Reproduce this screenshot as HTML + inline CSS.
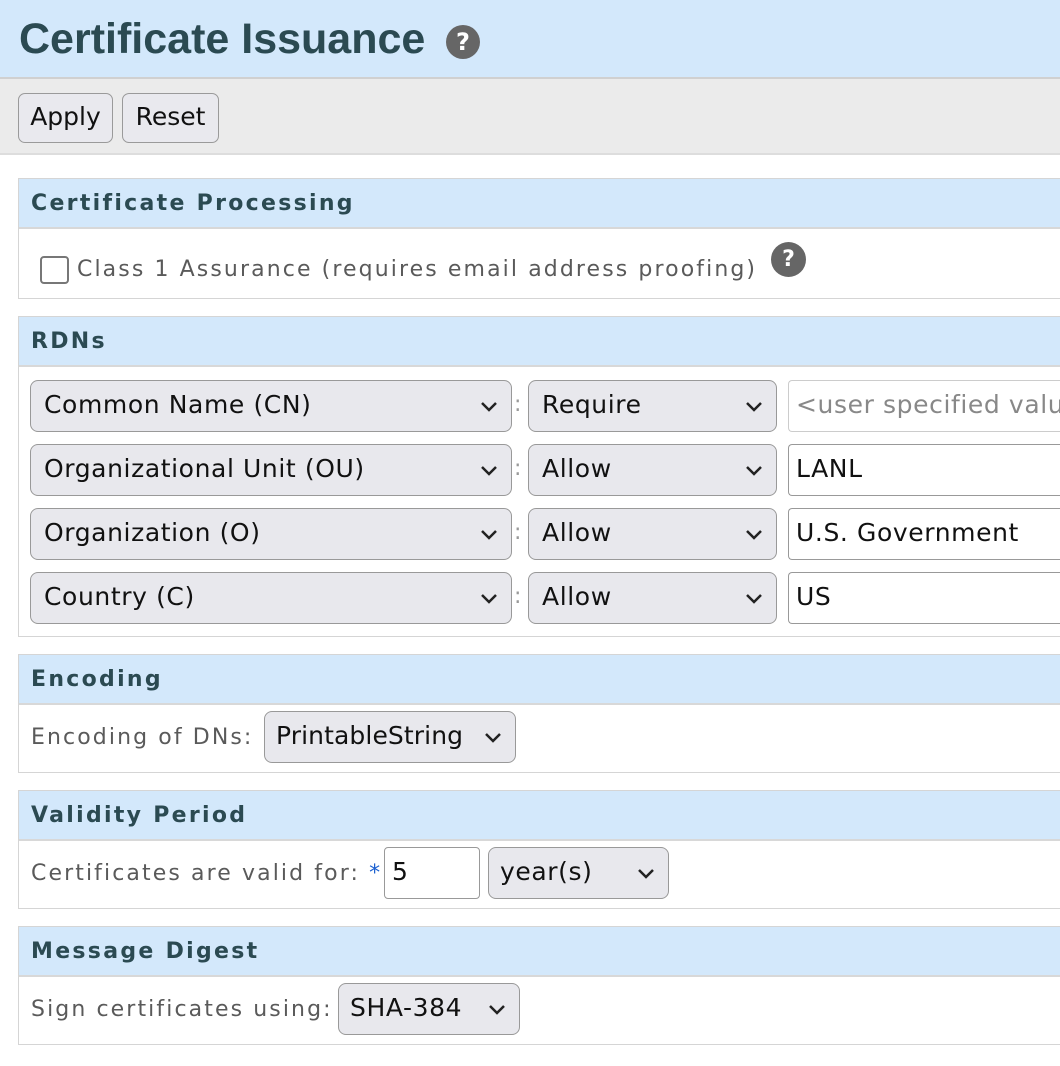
<!DOCTYPE html>
<html><head><style>
*{box-sizing:border-box;margin:0;padding:0}
body{width:1060px;height:1066px;background:#fff;position:relative;overflow:hidden;font-family:"DejaVu Sans","Liberation Sans",sans-serif}
.a{position:absolute}
.hdr{left:0;top:0;width:1060px;height:79px;background:#d3e8fb;border-bottom:2px solid #d0d0d0}
.title{left:19px;top:15px;font-size:43px;font-weight:bold;color:#2b4a52;font-family:"Liberation Sans",sans-serif;white-space:nowrap}
.q{width:34px;height:34px;border-radius:50%;background:#666;color:#fff;font-weight:bold;text-align:center;font-size:24px;line-height:34px}
.tb{left:0;top:79px;width:1060px;height:76px;background:#ebebeb;border-bottom:2px solid #ddd}
.btn{top:93px;height:50px;border:1.5px solid #9a9a9a;border-radius:7px;background:#e9e9ee;font-size:25px;line-height:46px;text-align:center;color:#111}
.box{left:18px;width:1060px;border:1.5px solid #d5d5d5;border-right:none}
.sh{height:50px;background:#d3e8fb;border-bottom:2px solid #d8d8d8;font-weight:bold;font-size:22px;color:#2b4a52;padding:12px 0 0 12px;letter-spacing:2.3px}
.lbl{font-size:22px;color:#5a5a5a;letter-spacing:2.1px;white-space:nowrap}
.sel{height:52px;border:1.5px solid #999;border-radius:8px;background:#e8e8ed;font-size:25px;color:#111;line-height:48px;padding-left:13px;letter-spacing:0.6px;white-space:nowrap;overflow:hidden}
.sel svg{position:absolute;right:13px;top:20px}
.inp{height:52px;border:1.5px solid #999;border-radius:4px 0 0 4px;border-right:none;background:#fff;font-size:25px;color:#111;line-height:48px;padding-left:7px;letter-spacing:0.6px;white-space:nowrap;overflow:hidden}
.colon{font-size:22px;color:#999}
</style></head><body>
<div class="a hdr"></div>
<div class="a title">Certificate Issuance</div>
<div class="a q" style="left:446px;top:25px">?</div>
<div class="a tb"></div>
<div class="a btn" style="left:18px;width:95px">Apply</div>
<div class="a btn" style="left:122px;width:97px">Reset</div>

<div class="a box" style="top:178px;height:121px">
<div class="sh">Certificate Processing</div>
</div>
<div class="a" style="left:40px;top:256px;width:29px;height:28px;border:2px solid #777;border-radius:4px;background:#fff"></div>
<div class="a lbl" style="left:77px;top:257px">Class 1 Assurance (requires email address proofing)</div>
<div class="a q" style="left:771px;top:242px;width:35px;height:35px;font-size:22px;line-height:35px">?</div>

<div class="a box" style="top:316px;height:321px">
<div class="sh">RDNs</div>
</div>

<div class="a box" style="top:654px;height:119px"><div class="sh">Encoding</div></div>
<div class="a lbl" style="left:31px;top:725px">Encoding of DNs:</div>

<div class="a box" style="top:790px;height:119px"><div class="sh">Validity Period</div></div>
<div class="a lbl" style="left:31px;top:861px">Certificates are valid for: <span style="color:#1a5fd0">*</span></div>

<div class="a box" style="top:926px;height:119px"><div class="sh">Message Digest</div></div>
<div class="a lbl" style="left:31px;top:997px">Sign certificates using:</div>

<div class="a sel" style="left:30px;top:380px;width:482px">Common Name (CN)<svg width="18" height="12"><path d="M2 2l7 7 7-7" stroke="#222" stroke-width="2.5" fill="none"/></svg></div>
<div class="a colon" style="left:514px;top:392px">:</div>
<div class="a sel" style="left:528px;top:380px;width:249px">Require<svg width="18" height="12"><path d="M2 2l7 7 7-7" stroke="#222" stroke-width="2.5" fill="none"/></svg></div>
<div class="a inp" style="left:788px;top:380px;width:280px;color:#888;border-color:#ccc">&lt;user specified value</div>

<div class="a sel" style="left:30px;top:444px;width:482px">Organizational Unit (OU)<svg width="18" height="12"><path d="M2 2l7 7 7-7" stroke="#222" stroke-width="2.5" fill="none"/></svg></div>
<div class="a colon" style="left:514px;top:456px">:</div>
<div class="a sel" style="left:528px;top:444px;width:249px">Allow<svg width="18" height="12"><path d="M2 2l7 7 7-7" stroke="#222" stroke-width="2.5" fill="none"/></svg></div>
<div class="a inp" style="left:788px;top:444px;width:280px">LANL</div>

<div class="a sel" style="left:30px;top:508px;width:482px">Organization (O)<svg width="18" height="12"><path d="M2 2l7 7 7-7" stroke="#222" stroke-width="2.5" fill="none"/></svg></div>
<div class="a colon" style="left:514px;top:520px">:</div>
<div class="a sel" style="left:528px;top:508px;width:249px">Allow<svg width="18" height="12"><path d="M2 2l7 7 7-7" stroke="#222" stroke-width="2.5" fill="none"/></svg></div>
<div class="a inp" style="left:788px;top:508px;width:280px">U.S. Government</div>

<div class="a sel" style="left:30px;top:572px;width:482px">Country (C)<svg width="18" height="12"><path d="M2 2l7 7 7-7" stroke="#222" stroke-width="2.5" fill="none"/></svg></div>
<div class="a colon" style="left:514px;top:584px">:</div>
<div class="a sel" style="left:528px;top:572px;width:249px">Allow<svg width="18" height="12"><path d="M2 2l7 7 7-7" stroke="#222" stroke-width="2.5" fill="none"/></svg></div>
<div class="a inp" style="left:788px;top:572px;width:280px">US</div>

<div class="a sel" style="left:264px;top:711px;width:252px;padding-left:11px;letter-spacing:0.1px">PrintableString<svg width="18" height="12"><path d="M2 2l7 7 7-7" stroke="#222" stroke-width="2.5" fill="none"/></svg></div>
<div class="a inp" style="left:384px;top:847px;width:96px;border-right:1.5px solid #999;border-radius:4px">5</div>
<div class="a sel" style="left:488px;top:847px;width:181px;padding-left:11px">year(s)<svg width="18" height="12"><path d="M2 2l7 7 7-7" stroke="#222" stroke-width="2.5" fill="none"/></svg></div>
<div class="a sel" style="left:338px;top:983px;width:182px;padding-left:11px">SHA-384<svg width="18" height="12"><path d="M2 2l7 7 7-7" stroke="#222" stroke-width="2.5" fill="none"/></svg></div>
</body></html>
